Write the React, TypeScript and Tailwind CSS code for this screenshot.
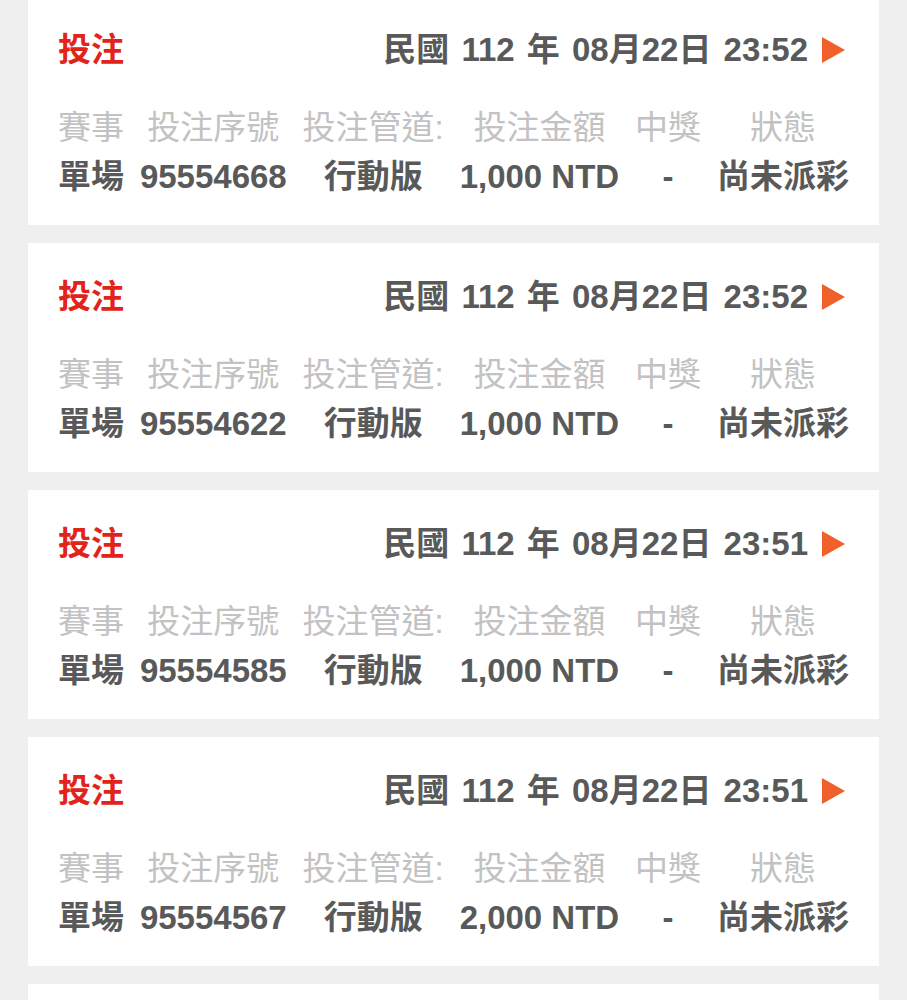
import React from "react";

type Bet = {
  time: string;
  serial: string;
  amount: string;
};

const bets: Bet[] = [
  { time: "23:52", serial: "95554668", amount: "1,000" },
  { time: "23:52", serial: "95554622", amount: "1,000" },
  { time: "23:51", serial: "95554585", amount: "1,000" },
  { time: "23:51", serial: "95554567", amount: "2,000" },
];

const font = {
  fontFamily: '"Liberation Sans", "Noto Sans CJK TC", sans-serif',
};

function Column({ label, value }: { label: string; value: string }) {
  return (
    <div className="flex flex-col items-center whitespace-nowrap">
      <div className="text-[#c2c2c2] font-normal leading-[49px]">{label}</div>
      <div className="text-[#595959] font-semibold leading-[49px]">{value}</div>
    </div>
  );
}

function BetCard({ bet }: { bet: Bet }) {
  return (
    <div className="bg-white h-[229px] px-[30px] pt-[34px] overflow-hidden">
      <div className="flex items-center justify-between h-[40px]">
        <div className="text-[#e2231a] font-semibold">投注</div>
        <div className="flex items-center pr-[4px]">
          <span className="text-[#595959] font-semibold whitespace-nowrap [word-spacing:3px]">
            民國 112 年 08月22日 {bet.time}
          </span>
          <svg
            width="23"
            height="26"
            viewBox="0 0 23 26"
            className="ml-[14px]"
          >
            <polygon points="0,0 23,13 0,26" fill="#f0602a" />
          </svg>
        </div>
      </div>
      <div className="flex justify-between mt-[33px]">
        <Column label="賽事" value="單場" />
        <Column label="投注序號" value={bet.serial} />
        <Column label="投注管道:" value="行動版" />
        <Column label="投注金額" value={`${bet.amount} NTD`} />
        <Column label="中獎" value="-" />
        <Column label="狀態" value="尚未派彩" />
      </div>
    </div>
  );
}

export default function App() {
  return (
    <div
      className="h-screen bg-[#efefef] px-[28px] overflow-hidden text-[33px]"
      style={font}
    >
      <div className="flex flex-col gap-[18px] -mt-[4px]">
        {bets.map((bet, index) => (
          <BetCard key={index} bet={bet} />
        ))}
        {/* next card, only its top edge is on screen */}
        <div className="bg-white h-[229px]" />
      </div>
    </div>
  );
}
